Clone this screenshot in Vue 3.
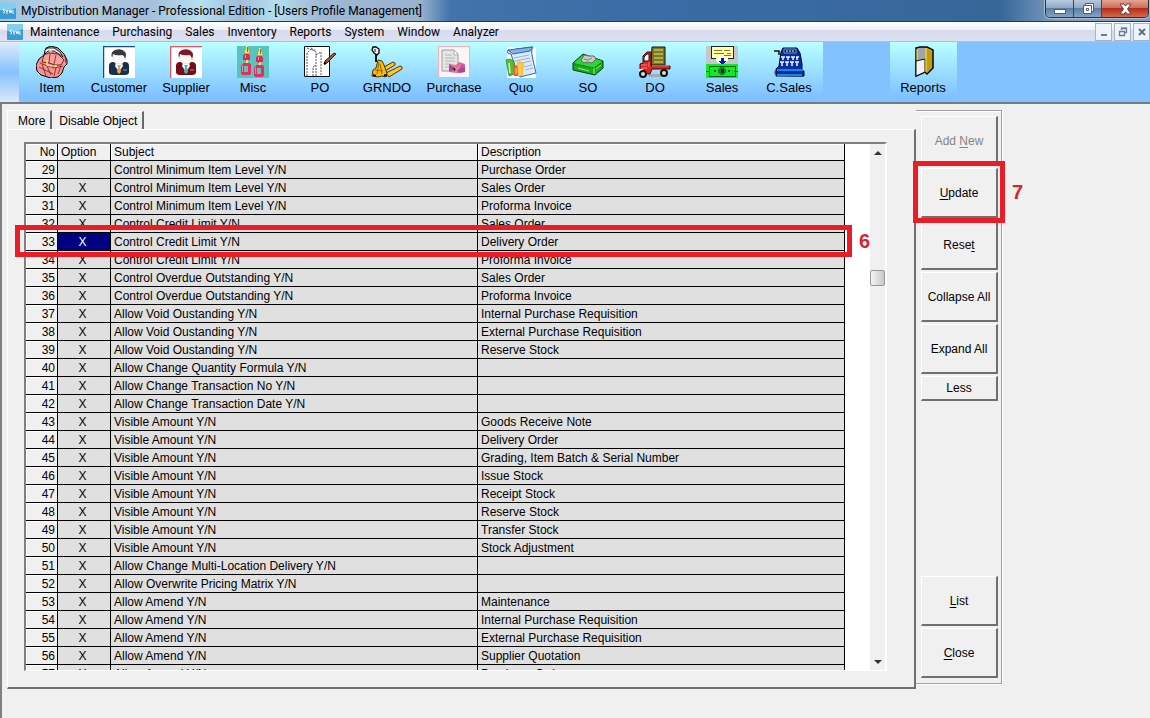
<script setup>
const menus = ['Maintenance', 'Purchasing', 'Sales', 'Inventory', 'Reports', 'System', 'Window', 'Analyzer']
const tools = ['Item', 'Customer', 'Supplier', 'Misc', 'PO', 'GRNDO', 'Purchase', 'Quo', 'SO', 'DO', 'Sales', 'C.Sales']

const entries = [
  ['Control Minimum Item Level Y/N', 'Purchase Order'],
  ['Control Minimum Item Level Y/N', 'Sales Order'],
  ['Control Minimum Item Level Y/N', 'Proforma Invoice'],
  ['Control Credit Limit Y/N', 'Sales Order'],
  ['Control Credit Limit Y/N', 'Delivery Order'],
  ['Control Credit Limit Y/N', 'Proforma Invoice'],
  ['Control Overdue Outstanding Y/N', 'Sales Order'],
  ['Control Overdue Outstanding Y/N', 'Proforma Invoice'],
  ['Allow Void Oustanding Y/N', 'Internal Purchase Requisition'],
  ['Allow Void Oustanding Y/N', 'External Purchase Requisition'],
  ['Allow Void Oustanding Y/N', 'Reserve Stock'],
  ['Allow Change Quantity Formula Y/N', ''],
  ['Allow Change Transaction No Y/N', ''],
  ['Allow Change Transaction Date Y/N', ''],
  ['Visible Amount Y/N', 'Goods Receive Note'],
  ['Visible Amount Y/N', 'Delivery Order'],
  ['Visible Amount Y/N', 'Grading, Item Batch & Serial Number'],
  ['Visible Amount Y/N', 'Issue Stock'],
  ['Visible Amount Y/N', 'Receipt Stock'],
  ['Visible Amount Y/N', 'Reserve Stock'],
  ['Visible Amount Y/N', 'Transfer Stock'],
  ['Visible Amount Y/N', 'Stock Adjustment'],
  ['Allow Change Multi-Location Delivery Y/N', ''],
  ['Allow Overwrite Pricing Matrix Y/N', ''],
  ['Allow Amend Y/N', 'Maintenance'],
  ['Allow Amend Y/N', 'Internal Purchase Requisition'],
  ['Allow Amend Y/N', 'External Purchase Requisition'],
  ['Allow Amend Y/N', 'Supplier Quotation'],
  ['Allow Amend Y/N', 'Purchase Order'],
]
const rows = entries.map(([subject, description], i) => ({
  no: 29 + i,
  option: i === 0 ? '' : 'X',
  subject,
  description,
}))
</script>

<template>
  <div class="window">
    <header class="titlebar">
      <svg class="app-icon" viewBox="0 0 16 16"><rect width="16" height="16" rx="1" fill="#3d9bd0" /><path d="M0 0h16v5Q8 9 0 7z" fill="#83cdee" /><path d="M3 7l2-1M3 7l2 2-2 1M6 7l1 2 1-2M7 9v2M9 7l1 3 1-3 1 3M13 7v4" stroke="#e4fbff" fill="none" /></svg>
      <h1>MyDistribution Manager - Professional Edition - [Users Profile Management]</h1>
      <div class="caption-buttons">
        <button type="button" aria-label="Minimize"><svg viewBox="0 0 16 14"><rect x="2.500" y="7.500" width="11" height="4" fill="#fff" stroke="#4d5a70" /></svg></button>
        <button type="button" aria-label="Restore"><svg viewBox="0 0 16 14"><path d="M5.500 1.500h8v8h-2v2h-8v-8h2z" fill="#fff" stroke="#4d5a70" /><path d="M5.500 3.500h6v6M6.500 6.500h2v2h-2z" fill="none" stroke="#4d5a70" /></svg></button>
        <button type="button" class="red" aria-label="Close window"><svg viewBox="0 0 16 14"><path d="M3 2h4l1.500 2L10 2h4l-3.500 5 3.500 5h-4L8.500 10 7 12H3l3.500-5z" fill="#fff" stroke="#6b3b40" /></svg></button>
      </div>
    </header>

    <nav class="menubar">
      <svg class="app-icon" viewBox="0 0 16 16"><rect width="16" height="16" rx="1" fill="#3d9bd0" /><path d="M0 0h16v5Q8 9 0 7z" fill="#83cdee" /><path d="M3 7l2-1M3 7l2 2-2 1M6 7l1 2 1-2M7 9v2M9 7l1 3 1-3 1 3M13 7v4" stroke="#e4fbff" fill="none" /></svg>
      <button v-for="m in menus" :key="m" type="button" class="menu">{{ m }}</button>
      <div class="mdi-buttons">
        <button type="button" aria-label="Minimize child"><svg viewBox="0 0 12 12"><path d="M3 8h6v2H3z" fill="#6a7c92" /></svg></button>
        <button type="button" aria-label="Restore child"><svg viewBox="0 0 12 12"><path d="M4.500 4V2.500h5v4H8M2.500 5.500h5v4h-5zM4 2h6M2 5.500h6" fill="none" stroke="#6a7c92" stroke-width="1.300" /></svg></button>
        <button type="button" aria-label="Close child"><svg viewBox="0 0 12 12"><path d="M3 3l6 6M9 3l-6 6" stroke="#5f7084" stroke-width="2" /></svg></button>
      </div>
    </nav>

    <div class="toolbar">
      <button v-for="t in tools" :key="t" type="button" class="tool">
        <svg v-if="t === 'Item'" viewBox="0 0 32 32">
          <path d="M8 9L10 2l5-2 7 2 6 6 3 6v4l-3 3-2 6-4 4-7 1-10-3-4-4-1-6 3-6z" fill="#f69390" stroke="#000" />
          <path d="M9 4l3-2 6 0 6 4 3 5-4-3-5-3-6 0-3 3z" fill="#d4fbfd" stroke="#000" stroke-width=".8" />
          <path d="M8 9l5-2 9 1 6 6-3 5-6 0-6-2-7-1z" fill="#f8a19b" stroke="#3a0c10" stroke-width=".8" />
          <path d="M14 8l-1 9M20 9l-2 9M4 17l5 2 9 3 9-2M3 21l6 3 8 4M6 18l4 12M11 20l4 9M20 22l-2 8M25 20l-3 8M29 10l1 7" fill="none" stroke="#6b2026" stroke-width=".8" />
          <path d="M11 14l0 5 5 1M13 5h3M18 20h3" fill="none" stroke="#ffe54d" stroke-width="1.500" />
        </svg>
        <svg v-else-if="t === 'Customer' || t === 'Supplier'" viewBox="0 0 32 32" :class="['person', t.toLowerCase()]">
          <path d="M0 0h32v32H0z" fill="#fff" />
          <path class="frame" d="M.5 32V.5H32" fill="none" stroke-width="1.500" />
          <path class="suit" d="M6 20q0-4 4-4h12q4 0 4 4v6q0 3-4 3H10q-4 0-4-3z" />
          <path d="M10 9q-1 9 6 9t6-9z" fill="#fffaf7" stroke="#e3dad6" stroke-width=".7" />
          <path class="hair" d="M9 12Q7 6 12 4q7-2 10 2 2 2 0 7-1-4-3-4-5 1-9-1z" />
          <path d="M13 17l3 1 3-1 1 3-4 6-4-6z" fill="#fff" />
          <path class="tie" d="M14 19h4l-1 2 1 5-2 2-2-2 1-5z" />
          <path d="M20 24h4" stroke="#fff" opacity=".5" />
        </svg>
        <svg v-else-if="t === 'Misc'" viewBox="0 0 32 32" shape-rendering="crispEdges">
          <rect width="32" height="32" fill="#58c4bd" />
          <g v-for="x in [0, 13]" :key="x" :transform="`translate(${x} ${x ? 2 : 0})`">
            <path d="M9 0h2v4h1v3H8V4h1z" fill="#ffe34d" /><path d="M10 1h1v5h-1z" fill="#986b22" />
            <path d="M7 8h5v1h1v5h-2v1H8v-1H6V9h1z" fill="#e22658" /><path d="M8 9h1v3H8z" fill="#ffa3c1" />
            <path d="M9 14h2v3H9z" fill="#ffe34d" />
            <path d="M6 17h6l2 2v8l-1 2H5l-1-2v-8zM7 20v6h4v-6z" fill="#e92c60" fill-rule="evenodd" /><path d="M5 19h1v7H5z" fill="#ff83aa" />
          </g>
        </svg>
        <svg v-else-if="t === 'PO'" viewBox="0 0 32 32">
          <path d="M.5.500h25v30H.5z" fill="#fff" stroke="#111" />
          <path d="M3 30V7l4-4 5 3v4M12 10V30M12 9l5-3v24M9 30v-9l3-2M3 2l5 2M7 2l5 3" fill="none" stroke="#555" stroke-dasharray="2 1" />
          <path d="M20 18l1-3 9-8 2 1-9 9z" fill="#ac5727" stroke="#351b0c" /><path d="M20 18l2-1" stroke="#000" stroke-width="2" />
        </svg>
        <svg v-else-if="t === 'GRNDO'" viewBox="0 0 32 32">
          <path d="M5 8v8" stroke="#111" stroke-width="2" /><path d="M2 1h3l3 2v4L6 9 3 7 1 4z" fill="#eee" stroke="#000" stroke-width="1.300" /><path d="M4 3v3" stroke="#111" />
          <path d="M13 21l9-5 2 1v2l-10 6zM15 27l14-7 2 1v2l-13 8z" fill="#ffc51e" stroke="#4f3400" />
          <path d="M7 14l4 1 2 4 3 8-2 4-3-1-4 1-6-1 1-6 3-2z" fill="#f7b915" stroke="#4f3400" />
          <path d="M8 16l-2 12M9 18l2 10M4 24l8 1" stroke="#916500" fill="none" /><path d="M2 29l3 1M13 29l3 1" stroke="#111" stroke-width="2" />
        </svg>
        <svg v-else-if="t === 'Purchase'" viewBox="0 0 32 32">
          <rect x=".5" y=".5" width="31" height="31" fill="#faf5f6" stroke="#ffabb8" />
          <path d="M4 4h12l4 4v17H4z" fill="#e5e7e6" stroke="#999" /><path d="M16 4v5h4" fill="#fff" stroke="#aaa" />
          <path d="M7 9h7M7 12h10M7 15h10M7 18h6M7 21h5" stroke="#b5b5b5" />
          <path d="M11 18l7 1 3-3 6 2v8l-8 1-8-1z" fill="#d46ba8" /><path d="M11 19l5 1v4l-5 1zM21 18l5 1-4 4zM19 23l8-2v5l-6 1z" fill="#b04593" /><path d="M14 19l5 4-2 3M23 18l-3 5" stroke="#ef8294" stroke-width="2" />
        </svg>
        <svg v-else-if="t === 'Quo'" viewBox="0 0 32 32">
          <path d="M2 1h29v31H2z" fill="#f8fdff" /><path d="M3 4q3 3 8-1L27 1q-1 6 1 13l3 13-16 4Q9 20 6 8 1 8 3 4z" fill="#d9eaf8" stroke="#376799" />
          <path d="M3 4l5 4 17-3 3-4-17 2z" fill="#85b5e4" stroke="#376799" /><path d="M9 12l15-3M10 15l15-3M12 18l14-3M18 21l9-2M20 24l8-2" stroke="#9ab5cf" />
          <path d="M1 14l4-1 4 2 1 13-6 2z" fill="#58bc32" stroke="#26802a" stroke-width=".7" /><path d="M4 17l1 10" stroke="#cdff9e" stroke-width="1.500" />
          <path d="M8 20l3-1 3 1v10H9z" fill="#f55a27" /><path d="M12 16l3-1 4 2-1 13h-5z" fill="#ffbf39" /><path d="M11 22v6M15 18v11" stroke="#ffe38a" />
        </svg>
        <svg v-else-if="t === 'SO'" viewBox="0 0 32 32">
          <path d="M1 17L11 8l20 7v7l-8 7-22-5z" fill="#19ad1d" stroke="#053e0c" /><path d="M2 17l9-8 19 6-8 7z" fill="#31d436" /><path d="M22 22v6M6 22l11 3M24 23l5-4" stroke="#8cf58a" />
          <path d="M2 18l20 4 9-6" fill="none" stroke="#087211" stroke-dasharray="2 1" /><path d="M9 15l3-6 5 1 5 0 2 3-4 4-5-1-3 1z" fill="#c9ccbe" stroke="#54705e" /><path d="M12 13l4 1 4-2" stroke="#7d877a" fill="none" />
        </svg>
        <svg v-else-if="t === 'DO'" viewBox="0 0 32 32">
          <path d="M9 28h15v3H10z" fill="#a4acb0" /><path d="M13 1h13v18H12z" fill="#7b7824" stroke="#171707" /><path d="M15 4h9M15 8h9M15 12h9M15 16h9" stroke="#c5c05b" stroke-width="1.500" />
          <path d="M4 10l4-4h4v14h19v3H13l-2 5-10-1v-9l3-1z" fill="#db2724" stroke="#450605" />
          <path d="M5 11l3-3h2v7H5z" fill="#effbfe" stroke="#450605" />
          <path d="M2 19h6M2 22h6M10 16v5M13 20h17" stroke="#ff7770" fill="none" /><path d="M0 23h4v3H0z" fill="#eee" /><circle cx="4" cy="28" r="3" fill="#ddd" stroke="#111" stroke-width="2" /><circle cx="25" cy="27" r="3" fill="#ddd" stroke="#111" stroke-width="2" />
        </svg>
        <svg v-else-if="t === 'Sales'" viewBox="0 0 32 32" shape-rendering="crispEdges">
          <path d="M0 0h32v18H0z" fill="#c6c6ce" /><path d="M5 0h22v12H5z" fill="#ffffa8" stroke="#222" /><path d="M8 4h8M18 4h6M8 7h10M21 7h4M18 9h7" stroke="#7c7431" />
          <path d="M10 12h12v3l-6 4-6-4z" fill="#fff" /><path d="M15 12h3v3h3l-5 4-4-4h3z" fill="#0711c8" /><path d="M0 18h32v14H0z" fill="#12e927" />
          <path d="M3 20h26v10H3z" fill="none" stroke="#0a6516" /><path d="M0 25h4M28 25h4" fill="none" stroke="#0a6516" /><circle cx="16" cy="25" r="4" fill="#128624" /><path d="M15 23h3v4h-3zM8 24h2v2H8zM22 24h2v2h-2z" fill="#063e12" />
        </svg>
        <svg v-else viewBox="0 0 32 32">
          <path d="M1 28h5v-3H1zM22 30l9-2v3H9z" fill="#718ca2" /><path d="M8 6L10 2h14l3 5 2 11v6l2 1v5H3v-7l3-3z" fill="#092ca0" stroke="#00042d" />
          <path d="M1 5h5v2M6 5v4" fill="none" stroke="#111" stroke-width="1.500" /><path d="M11 3h12v4H11z" fill="#101a48" stroke="#5b9ae8" /><path d="M14 4v2M17 4v2M20 4v2" stroke="#fff" />
          <path d="M8 11h4M13 11h4M18 11h4M23 11h3M7 16h4M12 16h4M17 16h4M22 16h4M10 11v3M15 11v3M20 11v3M24 11v3M9 16v4M14 16v4M19 16v4M24 16v4" stroke="#f0faff" stroke-width="1.500" />
          <path d="M4 24h26M4 29h25" stroke="#1685e8" stroke-width="2" />
        </svg>
        <span>{{ t }}</span>
      </button>
      <button type="button" class="tool reports">
        <svg viewBox="0 0 32 32">
          <path d="M9 2l4-1h7l6 3v18l-6 6-2-2-9 4z" fill="#d1ad12" stroke="#000" stroke-width="1.500" /><path d="M11 2h7v12h-7z" fill="#a4a4a7" /><path d="M9 15l9-2v13l-9 4z" fill="#f2f2ef" stroke="#111" /><path d="M19 2v24l1 1 5-6V4z" fill="#c39c0e" /><path d="M19 2v24M10 3v11" stroke="#ffe45b" fill="none" />
        </svg>
        <span>Reports</span>
      </button>
    </div>

    <main class="workspace">
      <section class="tabbed">
        <div class="tabs" role="tablist">
          <button type="button" role="tab" aria-selected="true" class="tab active">More</button>
          <button type="button" role="tab" aria-selected="false" class="tab">Disable Object</button>
        </div>
        <div class="panel">
          <div class="grid">
            <div class="table-clip">
              <table>
                <colgroup><col class="c-no" /><col class="c-option" /><col /><col /></colgroup>
                <thead>
                  <tr><th scope="col" class="no">No</th><th scope="col">Option</th><th scope="col">Subject</th><th scope="col">Description</th></tr>
                </thead>
                <tbody>
                  <tr v-for="r in rows" :key="r.no">
                    <th scope="row" class="no">{{ r.no }}</th>
                    <td class="option" :class="{ current: r.no === 33 }">{{ r.option }}</td>
                    <td>{{ r.subject }}</td>
                    <td>{{ r.description }}</td>
                  </tr>
                </tbody>
              </table>
            </div>
            <div class="scrollbar">
              <button type="button" aria-label="Scroll up"><svg viewBox="0 0 8 4"><path d="M0 4l4-4 4 4z" fill="#333" /></svg></button>
              <div class="track"><div class="thumb"></div></div>
              <button type="button" aria-label="Scroll down"><svg viewBox="0 0 8 4"><path d="M0 0l4 4 4-4z" fill="#333" /></svg></button>
            </div>
          </div>
          <div class="mark row-mark"><b>6</b></div>
        </div>
      </section>

      <aside class="actions">
        <button type="button" disabled><span>Add <u>N</u>ew</span></button>
        <div class="marked">
          <button type="button"><span><u>U</u>pdate</span></button>
          <div class="mark button-mark"><b>7</b></div>
        </div>
        <button type="button"><span>Rese<u>t</u></span></button>
        <button type="button">Collapse All</button>
        <button type="button">Expand All</button>
        <button type="button" class="small">Less</button>
        <div class="spacer"></div>
        <button type="button"><span><u>L</u>ist</span></button>
        <button type="button"><span><u>C</u>lose</span></button>
      </aside>
    </main>
  </div>
</template>

<style>
body { margin: 0; background: #f0f0f0; }
</style>

<style scoped>
* { box-sizing: border-box; }
button { margin: 0; padding: 0; border: 0; background: none; color: #000; font: inherit; white-space: nowrap; }
.window { display: flex; flex-direction: column; height: 100vh; min-height: 480px; overflow: hidden; font: 12px/16px "Liberation Sans", Arial, sans-serif; color: #000; background: #f0f0f0; }
.titlebar { flex: none; display: flex; align-items: center; height: 22px; border-bottom: 1px solid #24384f; background: linear-gradient(90deg, #9cc9e6 0, #b7cde2 60px, #a4bfdb 150px, #b4e0f0 200px, #a2bdd8 240px, #b4dff0 275px, #9fb9d4 320px, #98b3d0 420px, #4274ab 450px, #3a6ca5 650px, #376699 1000px, #7e9fc2 1060px); }
.app-icon { flex: none; width: 16px; height: 16px; }
h1 { flex: 1; margin: 0 0 0 5px; font: 12px/20px Roboto, sans-serif; white-space: nowrap; }
.caption-buttons { align-self: flex-start; display: flex; height: 18px; margin-right: 1px; border: 1px solid #22334d; border-top: 0; border-radius: 0 0 5px 5px; overflow: hidden; box-shadow: 0 0 0 1px #a9bed3; }
.caption-buttons button { display: grid; place-items: center; width: 28px; background: linear-gradient(#b9c9dc, #91aac6 45%, #5d7ea5 50%, #85a4c4); border-right: 1px solid #344863; }
.caption-buttons button.red { width: 46px; border: 0; background: linear-gradient(#e5a393, #cf6f5b 45%, #b42f19 50%, #d4674b); }
.caption-buttons svg { width: 16px; height: 14px; }
.menubar { flex: none; display: flex; align-items: center; height: 20px; padding-left: 7px; border-bottom: 1px solid #b9bccd; background: linear-gradient(#fff, #edf0f8 40%, #d6daec 45%, #dde1f1); }
.menu { margin-left: 7px; margin-right: 6px; font: 12px/18px Roboto, sans-serif; }
.mdi-buttons { display: flex; gap: 2px; margin-left: auto; }
.mdi-buttons button { display: grid; place-items: center; width: 17px; height: 18px; border: 1px solid #a6b4c6; background: #edf3fb; }
.mdi-buttons svg { width: 12px; height: 12px; }
.toolbar { flex: none; display: flex; height: 62px; padding-left: 19px; border-bottom: 2px solid #777b80; background: linear-gradient(#e2ecfa, #84c2fd 50%, #dce8f8) 0 0 / 19px 100% no-repeat, #82c3ff; }
.tool { display: flex; flex-direction: column; align-items: center; width: 67px; padding-top: 4px; padding-right: 1px; font-size: 13px; line-height: 16px; background: linear-gradient(#baffff, #80c2ff 90%); }
.tool svg { width: 32px; height: 32px; }
.tool span { margin-top: 2px; }
.reports { margin-left: 67px; }
.customer .frame { stroke: #28496f; }
.customer .suit { fill: #17304e; }
.customer .hair { fill: #36383c; }
.customer .tie { fill: #efa34f; }
.supplier .frame { stroke: #e85461; }
.supplier .suit { fill: #780b19; }
.supplier .hair { fill: #811724; }
.supplier .tie { fill: #45bcae; }
.workspace { flex: 1; min-height: 0; display: grid; grid-template-columns: minmax(0, 1fr) 86px; padding: 6px 148px 29px 5px; border-left: 2px solid #808080; }
.tabbed { min-height: 0; display: flex; flex-direction: column; }
.tabs { flex: none; display: flex; align-items: flex-end; gap: 2px; height: 19px; }
.tab { height: 18px; padding: 2px 5px 0; border-top: 1px solid #fff; border-right: 2px solid #696969; font-size: 12px; line-height: 15px; }
.tab.active { height: 19px; padding: 2px 5px 0 10px; border-left: 1px solid #fff; }
.panel { position: relative; flex: 1; min-height: 0; padding: 12px 27px 16px 16px; border: 1px solid #fff; border-right: 2px solid #707070; border-bottom: 2px solid #707070; }
.grid { display: flex; height: 100%; border: 2px solid #fff; border-top-color: #808080; border-left-color: #808080; border-bottom-width: 1px; background: #fff; }
.table-clip { flex: 1; min-width: 0; margin-right: 25px; overflow: hidden; }
table { width: 100%; table-layout: fixed; border-collapse: separate; border-spacing: 0; }
.c-no { width: 32px; }
.c-option { width: 53px; }
th, td { height: 18px; padding: 2px 3px 0; border-right: 1px solid #000; border-bottom: 1px solid #000; overflow: hidden; font-weight: normal; text-align: left; line-height: 15px; white-space: nowrap; background: #e0e0e0; }
th { background: #f0f0f0; box-shadow: inset 1px 1px #fff; }
thead th { height: 17px; padding-top: 1px; }
th.no { padding-right: 2px; text-align: right; }
td.option { padding-right: 6px; text-align: center; }
td.current { background: #000080; color: #fff; }
.scrollbar { flex: none; display: flex; flex-direction: column; width: 15px; background: #f0f0f0; }
.scrollbar button { display: grid; place-items: center; height: 17px; }
.scrollbar svg { width: 8px; height: 4px; }
.track { flex: 1; padding-top: 109px; }
.thumb { height: 16px; border: 1px solid #979797; border-radius: 2px; background: linear-gradient(90deg, #f5f5f5, #ddd 50%, #c9c9c9); }
.mark { position: absolute; z-index: 2; border: 5px solid #ea1c26; pointer-events: none; }
.mark b { position: absolute; left: 100%; top: 50%; margin-top: -12px; font-size: 20px; line-height: 24px; color: #d8242f; }
.row-mark { top: 95px; left: 7px; right: 62px; height: 32px; }
.row-mark b { margin-left: 12px; }
.actions { display: flex; flex-direction: column; gap: 2px; margin-bottom: 5px; padding: 5px 3px 5px 5px; border-top: 1px solid #a0a0a0; border-right: 1px solid #a0a0a0; border-bottom: 1px solid #a0a0a0; box-shadow: 1px 1px #fff, inset 0 1px #fff; }
.actions button { display: block; width: 100%; height: 50px; border: 1px solid #fff; border-right: 2px solid #707070; border-bottom: 2px solid #707070; font-size: 12px; }
.actions button.small { height: 25px; }
.actions button:disabled { color: #838383; }
.actions u { text-underline-offset: 2px; }
.marked { position: relative; }
.button-mark { inset: -7px -7px -5px -8px; }
.button-mark b { margin-left: 12px; }
.spacer { flex: 1; }
</style>
